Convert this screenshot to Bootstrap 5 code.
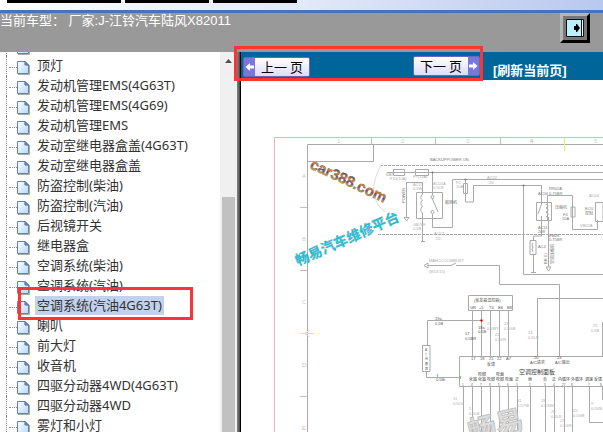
<!DOCTYPE html>
<html lang="zh-CN">
<head>
<meta charset="utf-8">
<meta name="viewport" content="width=device-width, initial-scale=1">
<title>当前车型</title>
<link href="https://cdn.jsdelivr.net/npm/bootstrap@5.3.0/dist/css/bootstrap.min.css" rel="stylesheet">
<style>
body{font-family:"Noto Sans","Noto Sans CJK SC",sans-serif;font-size:13px;line-height:20px;color:#333}
.strip{height:13px;padding-left:7px;background:linear-gradient(90deg,#fff,#e3e9f9 50%,#b9c8ef);border-bottom:3px solid #4a70c4}
.strip span{height:3px;width:84px;background:#000}
.strip span:first-child{width:114px}
.carbar{height:39px;background:#999;color:#fff;font-family:"Liberation Sans","Noto Sans CJK SC",sans-serif;padding-right:13px}
.carbar p{line-height:15px}
.exit-btn{width:30px;height:30px;padding:0;border:3px solid;border-color:#b5b5b5 #000 #000 #b5b5b5;background:#777}
.body-row,.main-pane{min-width:0;min-height:0}
.tree{width:220px}
.tree ul{margin-top:-16px}
.tree li{height:20px;padding-left:17px}
.tree li::before{content:"";position:absolute;left:6px;top:0;height:20px;border-left:1px dotted #888}
.tree li::after{content:"";position:absolute;left:9px;top:11px;width:8px;border-top:1px dotted #888}
.tree svg{width:13px;height:14px;margin-top:5px;margin-right:5px}
.tree a{height:19px;line-height:19px;padding:0 2px;color:#333;white-space:nowrap}
.tree a.chosen{background:#c1d2ee}
.sbar{width:17px;background:#f0f0f0}
.sbar i{width:13px;background:#c1c1c1;margin-top:128px}
.sbar svg{width:17px;height:17px}
.splitter{width:4px;background:linear-gradient(90deg,#888,#444 74%,#000 75%)}
.pager{height:28px;background:#069;padding:4px 2px 4px}
.page-btn{height:20px;width:67px;padding:0;border:1px solid #6868b8;border-radius:2px;background:linear-gradient(#fff,#dcdcfa);color:#000;font:400 13px/17px "Noto Sans CJK SC",sans-serif}
.page-btn svg{width:11px;height:18px;background:#7777dc}
.prev-btn{margin-top:1px}
.next-btn{margin-left:103px}
.reload{font:bold 13px/20px "Liberation Sans","Noto Sans CJK SC",sans-serif;margin-left:13px;padding-top:5px}
.ring{border:3px solid #f93535;pointer-events:none;z-index:3}
.ring-pager{left:-7px;top:-6px;width:249px;height:35px}
.ring-row{left:18px;top:-9px;width:175px;height:33px}
.sheet svg{width:362px;height:352px}
.sheet text{font-family:"Liberation Sans","Noto Sans CJK SC",sans-serif}
</style>
<script src="https://cdn.jsdelivr.net/npm/bootstrap@5.3.0/dist/js/bootstrap.bundle.min.js"></script>
</head>
<body class="vh-100 d-flex flex-column overflow-hidden bg-white">
<svg width="0" height="0" class="position-absolute" aria-hidden="true"><defs>
<linearGradient id="pg" x2="1" y2="1"><stop stop-color="#fff"/><stop offset="1" stop-color="#b4d8fa"/></linearGradient>
<symbol id="doc" viewBox="0 0 13 14"><path d="M1 13.5H12.5V4" fill="none" stroke="#aaa"/><path d="M.5.5H8L11.5 4V12.5H.5Z" fill="url(#pg)" stroke="#6480b8"/><path d="M8 .5V4H11.5Z" fill="#7d9bd0" stroke="#4d69a4"/></symbol>
</defs></svg>
<div class="strip d-flex gap-1 flex-shrink-0"><span></span><span></span><span></span></div>
<header class="carbar d-flex justify-content-between flex-shrink-0"><p class="m-0">当前车型： 厂家:J-江铃汽车陆风X82011</p>
<button class="exit-btn d-flex justify-content-center align-items-center" type="button" aria-label="退出"><svg width="18" height="18" viewBox="0 0 18 18"><path d="M.5.5H17.5V17.5H.5Z" fill="#bdf0ff" stroke="#111"/><path d="M15.5 1V17" stroke="#111"/><path d="M16.5 1V17" stroke="#fff"/><path d="M8 7H10V5H11L14 9 11 13H10V11H8Z" fill="#000"/></svg></button></header>
<div class="body-row d-flex flex-grow-1">
<nav class="tree overflow-hidden flex-shrink-0" aria-label="目录"><ul class="list-unstyled mb-0">
<li class="position-relative d-flex"><svg><use href="#doc"/></svg></li>
<li class="position-relative d-flex"><svg><use href="#doc"/></svg><a class="text-decoration-none" href="#">顶灯</a></li>
<li class="position-relative d-flex"><svg><use href="#doc"/></svg><a class="text-decoration-none" href="#">发动机管理EMS(4G63T)</a></li>
<li class="position-relative d-flex"><svg><use href="#doc"/></svg><a class="text-decoration-none" href="#">发动机管理EMS(4G69)</a></li>
<li class="position-relative d-flex"><svg><use href="#doc"/></svg><a class="text-decoration-none" href="#">发动机管理EMS</a></li>
<li class="position-relative d-flex"><svg><use href="#doc"/></svg><a class="text-decoration-none" href="#">发动室继电器盒盖(4G63T)</a></li>
<li class="position-relative d-flex"><svg><use href="#doc"/></svg><a class="text-decoration-none" href="#">发动室继电器盒盖</a></li>
<li class="position-relative d-flex"><svg><use href="#doc"/></svg><a class="text-decoration-none" href="#">防盗控制(柴油)</a></li>
<li class="position-relative d-flex"><svg><use href="#doc"/></svg><a class="text-decoration-none" href="#">防盗控制(汽油)</a></li>
<li class="position-relative d-flex"><svg><use href="#doc"/></svg><a class="text-decoration-none" href="#">后视镜开关</a></li>
<li class="position-relative d-flex"><svg><use href="#doc"/></svg><a class="text-decoration-none" href="#">继电器盒</a></li>
<li class="position-relative d-flex"><svg><use href="#doc"/></svg><a class="text-decoration-none" href="#">空调系统(柴油)</a></li>
<li class="position-relative d-flex"><svg><use href="#doc"/></svg><a class="text-decoration-none" href="#">空调系统(汽油)</a></li>
<li class="position-relative d-flex"><svg><use href="#doc"/></svg><a class="text-decoration-none chosen" href="#">空调系统(汽油4G63T)</a><div class="ring ring-row position-absolute"></div></li>
<li class="position-relative d-flex"><svg><use href="#doc"/></svg><a class="text-decoration-none" href="#">喇叭</a></li>
<li class="position-relative d-flex"><svg><use href="#doc"/></svg><a class="text-decoration-none" href="#">前大灯</a></li>
<li class="position-relative d-flex"><svg><use href="#doc"/></svg><a class="text-decoration-none" href="#">收音机</a></li>
<li class="position-relative d-flex"><svg><use href="#doc"/></svg><a class="text-decoration-none" href="#">四驱分动器4WD(4G63T)</a></li>
<li class="position-relative d-flex"><svg><use href="#doc"/></svg><a class="text-decoration-none" href="#">四驱分动器4WD</a></li>
<li class="position-relative d-flex"><svg><use href="#doc"/></svg><a class="text-decoration-none" href="#">雾灯和小灯</a></li>
</ul></nav>
<div class="sbar d-flex flex-column align-items-center flex-shrink-0"><svg viewBox="0 0 17 17"><path d="M5 11 8.500 7 12 11Z" fill="#505050"/></svg><i class="flex-grow-1"></i></div>
<div class="splitter flex-shrink-0"></div>
<main class="main-pane flex-grow-1 d-flex flex-column">
<div class="pager position-relative d-flex flex-shrink-0">
<button type="button" class="page-btn prev-btn d-flex"><svg viewBox="0 0 11 18"><path d="M1.500 9 6 5V7.500H10V10.500H6V13Z" fill="#fff"/></svg><span class="flex-grow-1">上一 页</span></button>
<button type="button" class="page-btn next-btn d-flex"><span class="flex-grow-1">下一 页</span><svg viewBox="0 0 11 18"><path d="M9.500 9 5 5V7.500H1V10.500H5V13Z" fill="#fff"/></svg></button>
<a class="reload text-white text-decoration-none text-nowrap" href="#">[刷新当前页]</a>
<div class="ring ring-pager position-absolute"></div>
</div>
<div class="sheet flex-grow-1 overflow-hidden">
<svg class="d-block" viewBox="241 80 362 352" role="img" aria-label="空调系统电路图">
<defs><linearGradient id="wm" x2="0" y2="1"><stop offset=".2" stop-color="#445"/><stop offset=".4" stop-color="#f08a28"/><stop offset=".6" stop-color="#80437c"/><stop offset=".85" stop-color="#e5cc30"/></linearGradient></defs>
<g fill="none" stroke-width="1">
<path d="M274.500 432V137.500H603M371.500 138V144M435.500 138V144M500.500 138V144M300 207.500H307M300 270.500H307M300 396.500H307" stroke="#dfb4b4"/>
<path d="M307.500 432V144.500H603M307 161.500H373.500V144" stroke="#aaa"/>
<path d="M564.500 138V151M300 333.500H314" stroke="#eeee55"/>
<path d="M310 330 304 333.500 310 337" stroke="#ddd"/>
<path d="M603 165.500H381M378 234.500H603" stroke="#aaa" stroke-dasharray="3 1"/>
<path d="M381 165.500Q374 177 373.500 190Q374 203 385 212" stroke="#ddd"/>
<g stroke="#aaa">
<path d="M387 172.500H603M393.500 169.500H404.500V175.500H393.500ZM415.500 169.500H428.500V175.500H415.500ZM406.500 218V182.500H422.500V194M404 217.500H409L406.500 221Z"/>
<path d="M416.500 192.500H442.500V218.500H416.500ZM422.500 194Q419 198 422.500 200Q419 204 422.500 206Q419 210 422.500 213V241M421 241.500H425M432.500 172V195M432 198 438 212M432.500 214V227.500H452.500V179.500H603"/>
<circle cx="432.500" cy="197" r="1.500"/><circle cx="432.500" cy="212" r="1.500"/>
<path d="M465.500 179V202H473.500V185.500H541.500V204M463.500 183.500H467.500V193.500H463.500ZM523.500 185V274.500H603M536.500 202.500H551.500V220.500H536.500ZM541.500 204 538 214M541.500 216V236H533.500V240M547.500 220V195.500H572.500V229.500H597.500V220M546 204Q550 206 546 208Q550 210 546 212Q550 214 546 217M548.500 217V267M546 267H551L548.500 271ZM571 207H575V217H571ZM595.500 202.500H603V221.500H595.500ZM530 240.500H536V254.500H530ZM533.500 254V272M531 272.500H536M533 243Q531 245 533 247Q531 249 533 252"/>
<path d="M424 265.500 428 263V268ZM428 265.500H451L456 263M456 265.500H499.500V284.500H559.500V356M468.500 295.500H512.500V310.500H468.500ZM472.500 310V356M481.500 310V356M490.500 310V356M499.500 310V356M508.500 310V356M481 320.500H427.500V346M422.500 345.500H430V371.500H422.500ZM426.500 372V377.500H459M603 356.500H459.500V386.500H603M537.500 356V298.500H603M602.500 322V356"/>
<path d="M463.500 387V432M472.500 387V432M481.500 387V432M490.500 387V432M499.500 387V432M508.500 387V432M517.500 387V432M530.500 387V432M545.500 387V432M554.500 387V432M564.500 387V432M572.500 387V432M589.500 387V422.500H603M602.500 387V400"/>
</g></g>
<g fill="#ccc" font-size="6"><text x="337" y="143">1</text><text x="401" y="143">2</text><text x="466" y="143">3</text><text x="530" y="143" fill="#d99">4</text><text x="594" y="143">5</text><text x="302" y="178" fill="#dbb">A</text><text x="302" y="241">B</text><text x="302" y="304">C</text><text x="302" y="367" fill="#dbb">D</text><text x="302" y="430" fill="#dbb">E</text></g>
<g fill="#aaa" font-size="4">
<text x="430" y="161" fill="#777">BACKUPPOWER  ON</text><text x="386" y="176">BAT</text><text x="390" y="180">F10(10A)</text><text x="413" y="178">F7(15A)</text><text x="413" y="186">AC01</text><text x="413" y="190">0.5W</text><text x="433" y="185">AC01A</text><text x="433" y="189">0.5LR</text><text x="445" y="204" fill="#666">鼓风机</text><text x="413" y="226">GB709</text><text x="413" y="230">0.5B</text><text x="434" y="235">AC02</text><text x="436" y="240">20</text><text x="487" y="179">AC02</text><text x="489" y="184">20</text><text x="456" y="184">F2</text><text x="456" y="188">10A</text>
<g fill="#777"><text x="538" y="195">AC06</text><text x="549" y="190">RR02A</text><text x="549" y="195">0.75BR</text><text x="555" y="209">压缩机</text><text x="563" y="216">F4</text><text x="562" y="220">10A</text><text x="538" y="229">AC11</text><text x="538" y="233">20R</text><text x="549" y="237">EB08</text><text x="549" y="241">0.75BR</text><text x="538" y="248">AC4</text><text x="585" y="210">ECU</text><text x="585" y="215">控制</text></g>
<text x="589" y="197">AC04</text><text x="580" y="227">VB02A</text><text x="429" y="262">MAHCCOOMBUST</text><text x="429" y="273">(M13:15)</text><text transform="translate(405 203) rotate(-90)" fill="#777">POWER</text><text transform="translate(554 264) rotate(-90)" fill="#777">空调压缩机</text><text transform="translate(547 264) rotate(-90)" fill="#777">BR 01</text>
<g fill="#555"><text x="474" y="302">(蒸发器温控器)</text><text x="470" y="309">GR</text><text x="479" y="309">+5</text><text x="489" y="309">T4</text><text x="498" y="309">B6</text><text x="507" y="309">B8</text><text x="435" y="320">19a</text><text x="435" y="325">0.5B</text><text x="478" y="329">18a</text><text x="478" y="333">0.5B</text><text x="465" y="335">17</text><text x="465" y="340">0.5BR</text><text x="436" y="381">0.5Br</text><text x="471" y="360">17</text><text x="480" y="360">18</text><text x="489" y="360">21</text><text x="497" y="360">22</text><text x="506" y="360">A7</text><text x="487" y="366">反馈</text><text x="534" y="359">20</text><text x="530" y="364">A/C请求</text><text x="557" y="359">24</text><text x="555" y="364">A/C输出</text></g>
<text x="487" y="325">21</text><text x="487" y="330">0.5WY</text><text x="495" y="336">22</text><text x="495" y="341">0.5VR</text><text x="504" y="325">23</text><text x="504" y="330">0.5GB</text><text x="528" y="334">14</text><text x="528" y="339">0.5LR</text><text x="593" y="327">25</text><text x="591" y="332">0.5B</text>
<text x="453" y="400">11</text><text x="453" y="405">0.5LV</text><text x="469" y="410">5</text><text x="469" y="415">0.5LB</text><text x="517" y="402">31</text><text x="517" y="407">0.5YW</text><text x="541" y="402">28</text><text x="541" y="407">0.5GW</text><text x="551" y="413">26</text><text x="551" y="418">0.5LR</text><text x="560" y="422">27</text><text x="560" y="427">0.5GR</text><text x="573" y="412">29</text><text x="573" y="417">0.5GB</text><text x="591" y="405">9</text><text x="591" y="410">0.5VB</text></g>
<g fill="#444" font-size="4"><text x="519" y="374" font-size="6">空调控制面板</text><text x="469" y="381">化霜</text><text x="478" y="376">吹脚</text><text x="478" y="381">化霜</text><text x="487" y="381">吹脚</text><text x="496" y="376">吹面</text><text x="496" y="381">吹脚</text><text x="505" y="381">吹面</text><text x="515" y="381">正</text><text x="528" y="381">地</text><text x="543" y="381">负</text><text x="552" y="381">正</text><text x="558" y="381">内循环</text><text x="571" y="381">外循环</text><text x="585" y="381">调速</text><text x="594" y="381">反馈</text></g>
<g fill="#555" font-size="3"><text x="462" y="386">1</text><text x="471" y="386">4</text><text x="480" y="386">7</text><text x="489" y="386">8</text><text x="498" y="386">5</text><text x="507" y="386">6</text><text x="516" y="386">3</text><text x="529" y="386">2</text><text x="544" y="386">3</text><text x="553" y="386">4</text><text x="562" y="386">27</text><text x="571" y="386">8</text><text x="588" y="386">7</text><text x="600" y="386">8</text><text x="425" y="351">A</text><text x="425" y="356">7</text><text x="425" y="360">传</text><text x="425" y="365">感</text><text x="425" y="370">器</text></g>
<circle cx="481.500" cy="320.500" r="1.200" fill="#e00"/><circle cx="432.500" cy="172.500" r="1" fill="#777"/><circle cx="465.500" cy="179.500" r="1" fill="#777"/><circle cx="523.500" cy="185.500" r="1" fill="#777"/>
<path d="M437.500 374V377M460.500 376V379" stroke="#6d6"/>
<text transform="translate(309 168) rotate(25)" font-size="15" font-weight="bold" fill="url(#wm)" stroke="#665" stroke-width=".4">car388.com</text>
<text transform="translate(298 266) rotate(-24)" font-size="14" font-weight="bold" fill="#27c3dc" stroke="#4a8b96" stroke-width=".2">畅易汽车维修平台</text>
<text transform="translate(471 442) rotate(-14)" font-size="28" font-weight="bold" fill="#ddd" stroke="#bbb" stroke-width=".8">畅易</text>
</svg></div>
</main></div>
</body>
</html>
